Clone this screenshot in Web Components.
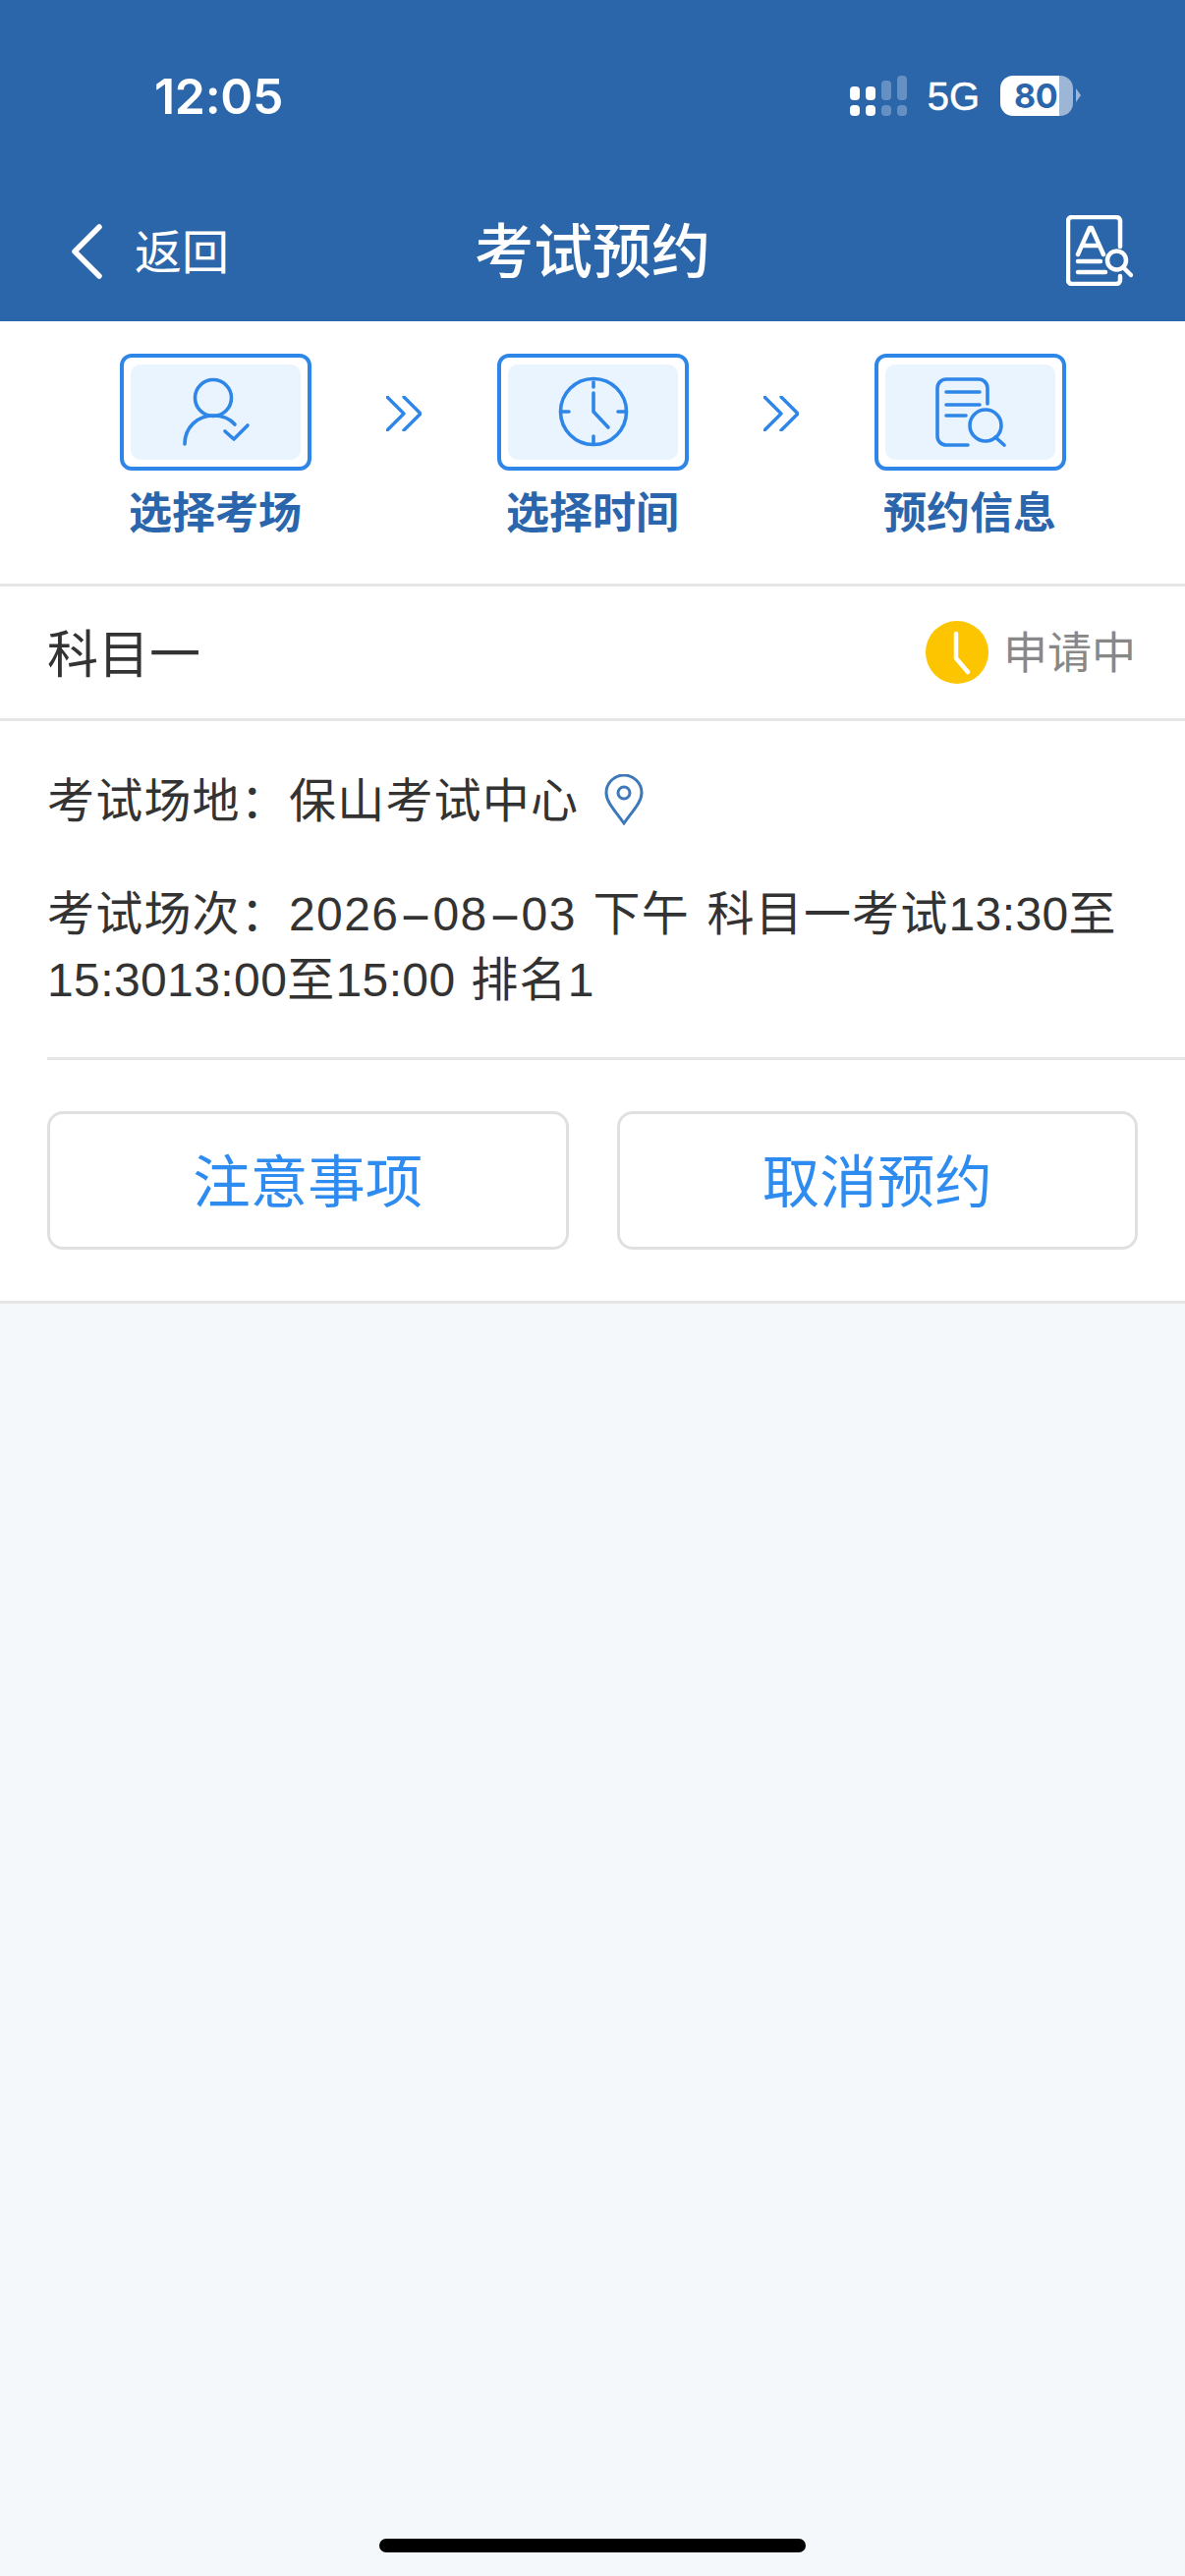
<!DOCTYPE html>
<html lang="zh-CN"><head><meta charset="utf-8">
<style>
html,body{margin:0;padding:0;background:#f5f8fa}
body{width:1206px;height:2622px;overflow:hidden;font-family:"Liberation Sans","Noto Sans CJK SC",sans-serif;display:flex;flex-direction:column}
.n{letter-spacing:.4px;word-spacing:2px}
.d{letter-spacing:1.4px;word-spacing:2px}
.h{display:inline-block;width:34px;text-align:center;transform:scaleX(2.1);letter-spacing:0}
</style></head><body>
<app-header></app-header>
<step-bar>
  <step-item label="选择考场"><svg viewBox="0 0 173 98" width="173" height="98" fill="none" stroke="#2e86e8" stroke-width="3.6" stroke-linecap="round" stroke-linejoin="round"><circle cx="84" cy="34" r="18.5"/><path d="M55 81c0-17 13-29 29-29 9 0 17 3 22 9"/><path d="M96 68l9 8 14-14"/></svg></step-item>
  <step-chevron></step-chevron>
  <step-item label="选择时间"><svg viewBox="0 0 173 98" width="173" height="98" fill="none" stroke="#2e86e8" stroke-width="3.6" stroke-linecap="round" stroke-linejoin="round"><circle cx="87" cy="48" r="33.500"/><path d="M87 29v19l15 16M54 48h8M112 48h8M87 18v5M87 73v7"/></svg></step-item>
  <step-chevron></step-chevron>
  <step-item label="预约信息"><svg viewBox="0 0 173 98" width="173" height="98" fill="none" stroke="#2e86e8" stroke-width="3.6" stroke-linecap="round" stroke-linejoin="round"><path d="M84 82H62a9 9 0 0 1-9-9V24a9 9 0 0 1 9-9h33a9 9 0 0 1 9 9v16"/><path d="M62 28h34M62 41h34M62 52h20"/><circle cx="102" cy="62" r="16"/><path d="M112 74l9 8"/></svg></step-item>
</step-bar>
<subject-row></subject-row>
<info-card>
  <info-line>考试场地：保山考试中心<svg slot="after" width="40" height="52" viewBox="0 0 40 52" fill="none" stroke="#3d78b8" stroke-width="3"><path d="M20 50C10 36 2 28 2 19a18 18 0 0 1 36 0c0 9-8 17-18 31z"/><circle cx="20" cy="19" r="6"/></svg></info-line>
  <info-line>考试场次：<span class="d">2026<span class="h">-</span>08<span class="h">-</span>03 </span>下午 科目一考试<span class="n">13:30</span>至<span class="n">15:3013:00</span>至<span class="n">15:00 </span>排名<span class="n">1</span></info-line>
  <action-row>
    <action-button>注意事项</action-button>
    <action-button>取消预约</action-button>
  </action-row>
</info-card>
<home-bar></home-bar>
<script>
function def(name,html){customElements.define(name,class extends HTMLElement{connectedCallback(){if(this.shadowRoot)return;this.attachShadow({mode:"open"}).innerHTML=html.replace(/\{label\}/g,this.getAttribute("label")||"")}})}
def("app-header",`<style>
:host{display:block;background:#2c66aa;color:#fff;height:327px}
.status{display:flex;justify-content:space-between;height:192px;box-sizing:border-box;padding:73px 114px 0 157px}
.time{font:600 50px/50px Inter,sans-serif;letter-spacing:-.3px}
.right{display:flex;align-items:flex-start}
.sig{display:grid;grid-template-columns:repeat(4,10.500px);column-gap:5.500px;grid-template-rows:25px 11px;row-gap:5px;width:59px;margin-top:4px}
.sig i{display:block;height:11px;background:#fff;border-radius:4px;align-self:end}
.sig i.o{opacity:.28}
.net{font:400 40px/40px "Liberation Sans",sans-serif;-webkit-text-stroke:.5px #fff;margin:5px 21px 0 20px}
.bat{position:relative;width:74px;height:41px;margin-top:4px;border-radius:13px;background:linear-gradient(90deg,#fff 81%,#9db6d6 81%);color:#2c66aa;font:700 34px/41px Inter,sans-serif;text-indent:14px;letter-spacing:-.5px}
.bat:after{content:"";position:absolute;left:77px;top:13px;width:0;height:0;border-left:5px solid #9db6d6;border-top:7px solid transparent;border-bottom:7px solid transparent}
.nav{display:flex;align-items:center;justify-content:space-between;height:135px;position:relative;padding:0 53px 0 72px;box-sizing:border-box}
.back{display:flex;align-items:center;font-size:48px;gap:33px;margin-top:-8px}
.back span{padding-bottom:6px}
.title{position:absolute;left:0;right:0;text-align:center;font-size:60px;font-weight:500;top:30px;line-height:72px;pointer-events:none}
svg{display:block}
</style>
<div class="status"><div class="time">12:05</div><div class="right">
<div class="sig"><i style="height:14px"></i><i style="height:14px"></i><i class="o" style="height:20px"></i><i class="o" style="height:25px"></i><i></i><i></i><i class="o"></i><i class="o"></i></div>
<div class="net">5G</div><div class="bat">80</div></div></div>
<div class="nav"><div class="back"><svg width="32" height="56" viewBox="0 0 32 56" fill="none" stroke="#fff" stroke-width="5.500" stroke-linecap="round" stroke-linejoin="round"><path d="M29 3L4 28l25 25"/></svg><span>返回</span></div>
<div class="title">考试预约</div>
<svg style="margin-top:-10px" width="68" height="72" viewBox="0 0 68 72" fill="none" stroke="#fff" stroke-width="4.500" stroke-linecap="round" stroke-linejoin="round"><path d="M55 32V6a4 4 0 0 0-4-4H6a4 4 0 0 0-4 4v60a4 4 0 0 0 4 4h45a4 4 0 0 0 4-4v-4"/><path d="M12 40L24 13h2l12 27M16 31h18M12 47h23M12 58h28"/><circle cx="51.500" cy="46" r="9.500"/><path d="M58 53l8 8"/></svg></div>`);
def("step-bar",`<style>:host{display:flex;justify-content:center;gap:76.5px;height:267px;box-sizing:border-box;padding-top:33px;background:#fff}</style><slot></slot>`);
def("step-item",`<style>:host{display:flex;flex-direction:column;align-items:center;width:195px}
.box{width:195px;height:119px;box-sizing:border-box;border:4px solid #2e86e8;border-radius:12px;padding:7px;background:#fff}
.in{height:97px;background:#e9f4fe;border-radius:10px;display:flex;align-items:center;justify-content:center;overflow:hidden}
.l{font-size:44px;font-weight:700;line-height:56px;margin-top:16px;color:#2b66ac;white-space:nowrap}
::slotted(svg){display:block}</style><div class="box"><div class="in"><slot></slot></div></div><div class="l">{label}</div>`);
def("step-chevron",`<style>:host{display:block;width:36px;height:36px;margin-top:43px}svg{display:block}</style><svg width="36" height="36" viewBox="0 0 36 36" fill="none" stroke="#2e86e8" stroke-width="3.4" stroke-linecap="round" stroke-linejoin="round"><path d="M1 1l17 17L1 35M18 1l17 17-17 17"/></svg>`);
def("subject-row",`<style>:host{display:flex;align-items:center;justify-content:space-between;height:134px;background:#fff;border-top:3px solid #e6e6e6;border-bottom:3px solid #e6e6e6;padding:0 50px 0 48px}
.t{font-size:52px;color:#333;padding-bottom:4px}.s{display:flex;align-items:center;gap:15px;font-size:45px;color:#888}.s span{padding-bottom:6px}svg{display:block}</style>
<div class="t">科目一</div><div class="s"><svg width="64" height="64" viewBox="0 0 64 64"><circle cx="32" cy="32" r="32" fill="#fdc500"/><path d="M31 13v25l12 14" fill="none" stroke="#fff" stroke-width="4.500" stroke-linecap="round" stroke-linejoin="round"/></svg><span>申请中</span></div>`);
def("info-card",`<style>:host{display:block;background:#fff;height:593px;box-sizing:border-box;padding:48px 0 0 48px;border-bottom:3px solid #e6e6e6}</style><slot></slot>`);
def("info-line",`<style>:host{display:block;font-size:48px;line-height:67px;color:#333;padding-right:48px;margin-bottom:48px;letter-spacing:1.2px;word-spacing:3px}
:host(:nth-of-type(2)){margin-bottom:45px}
.f{display:flex;align-items:center;gap:26px}::slotted(svg){display:block;margin-top:-4px}</style><div class="f"><span><slot></slot></span><slot name="after"></slot></div>`);
def("action-row",`<style>:host{display:flex;gap:49px;border-top:3px solid #e6e6e6;padding:52px 48px 0 0}</style><slot></slot>`);
def("action-button",`<style>:host{display:flex;align-items:center;justify-content:center;width:531px;height:141px;box-sizing:border-box;border:3px solid #e0e0e0;border-radius:16px;font-size:58.500px;color:#2e8cf0;padding-bottom:6px}</style><slot></slot>`);
def("home-bar",`<style>:host{display:block;position:absolute;left:386px;top:2584px;width:434px;height:14px;border-radius:7px;background:#000}</style>`);
</script>
</body></html>
